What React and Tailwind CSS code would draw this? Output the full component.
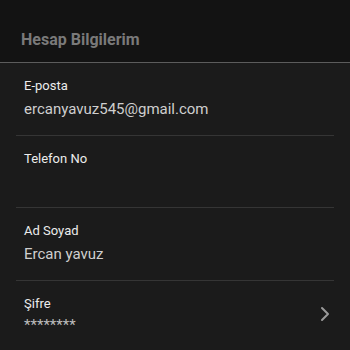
import { ChevronRight } from "lucide-react";

const rows = [
    { label: "E-posta", value: "ercanyavuz545@gmail.com" },
    { label: "Telefon No", value: "" },
    { label: "Ad Soyad", value: "Ercan yavuz" },
];

function Row({ label, value }) {
    return (
        <div>
            <div className="px-6 pt-[13px] pb-[14.5px]">
                <div className="text-[13px] leading-5 text-[#ececec]">{label}</div>
                <div className="mt-[2px] text-[15px] leading-[22px] text-[#cfcfcf] min-h-[22px]">{value}</div>
            </div>
            <div className="mx-4 h-px bg-[#353535]" />
        </div>
    );
}

export default function App() {
    return (
        <div
            className="w-[350px] h-[350px] overflow-hidden bg-[#1b1b1b]"
            style={{ fontFamily: "Roboto, 'Liberation Sans', sans-serif" }}
        >
            {/* header */}
            <div className="h-[63px] bg-[#131313] border-b border-[#5c5c5c] pl-[21px] pt-[28px]">
                <span className="text-[16px] leading-[22px] font-bold text-[#7a7a7a]">Hesap Bilgilerim</span>
            </div>

            {rows.map((r) => (
                <Row key={r.label} label={r.label} value={r.value} />
            ))}

            {/* password */}
            <div className="flex items-center justify-between pl-6 pr-[13px] pt-[13px]">
                <div>
                    <div className="text-[13px] leading-5 text-[#ececec]">Şifre</div>
                    <div className="text-[15px] leading-5 pt-[1px] text-[#bdbdbd]">********</div>
                </div>
                <ChevronRight size={24} strokeWidth={2} className="text-[#9a9a9a]" />
            </div>
        </div>
    );
}
